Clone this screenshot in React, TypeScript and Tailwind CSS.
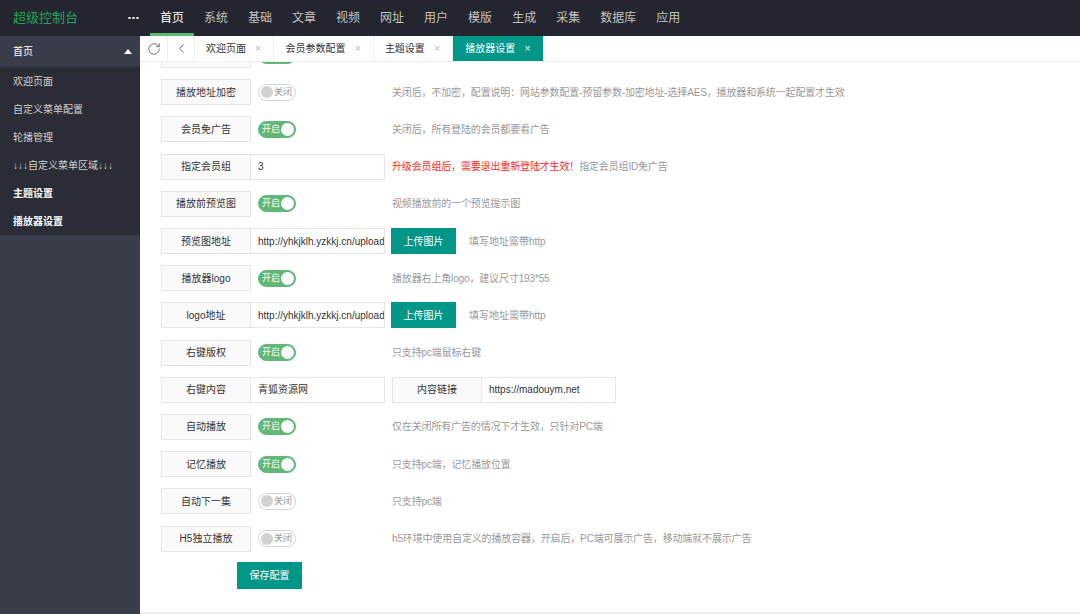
import { RotateCw, ChevronLeft } from "lucide-react";

const navItems = ["首页", "系统", "基础", "文章", "视频", "网址", "用户", "模版", "生成", "采集", "数据库", "应用"];

const sideItems = [
  { text: "欢迎页面", strong: false },
  { text: "自定义菜单配置", strong: false },
  { text: "轮播管理", strong: false },
  { text: "↓↓↓自定义菜单区域↓↓↓", strong: false },
  { text: "主题设置", strong: true },
  { text: "播放器设置", strong: true },
];

const tabs = [
  { text: "欢迎页面", active: false },
  { text: "会员参数配置", active: false },
  { text: "主题设置", active: false },
  { text: "播放器设置", active: true },
];

type Row =
  | { kind: "switch"; label: string; on: boolean; desc: string }
  | { kind: "input"; label: string; value: string; red?: string; desc: string }
  | { kind: "upload"; label: string; value: string; desc: string }
  | { kind: "pair"; label: string; value: string; label2: string; value2: string };

const uploadUrl = "http://yhkjklh.yzkkj.cn/upload/20210315/logo.png";

const rows: Row[] = [
  { kind: "switch", label: "播放器开关", on: true, desc: "" },
  { kind: "switch", label: "播放地址加密", on: false, desc: "关闭后，不加密，配置说明：网站参数配置-预留参数-加密地址-选择AES，播放器和系统一起配置才生效" },
  { kind: "switch", label: "会员免广告", on: true, desc: "关闭后，所有登陆的会员都要看广告" },
  { kind: "input", label: "指定会员组", value: "3", red: "升级会员组后，需要退出重新登陆才生效！", desc: "指定会员组ID免广告" },
  { kind: "switch", label: "播放前预览图", on: true, desc: "视频播放前的一个预览提示图" },
  { kind: "upload", label: "预览图地址", value: uploadUrl, desc: "填写地址需带http" },
  { kind: "switch", label: "播放器logo", on: true, desc: "播放器右上角logo，建议尺寸193*55" },
  { kind: "upload", label: "logo地址", value: uploadUrl, desc: "填写地址需带http" },
  { kind: "switch", label: "右键版权", on: true, desc: "只支持pc端鼠标右键" },
  { kind: "pair", label: "右键内容", value: "青狐资源网", label2: "内容链接", value2: "https://madouym.net" },
  { kind: "switch", label: "自动播放", on: true, desc: "仅在关闭所有广告的情况下才生效，只针对PC端" },
  { kind: "switch", label: "记忆播放", on: true, desc: "只支持pc端，记忆播放位置" },
  { kind: "switch", label: "自动下一集", on: false, desc: "只支持pc端" },
  { kind: "switch", label: "H5独立播放", on: false, desc: "h5环境中使用自定义的播放容器，开启后，PC端可展示广告，移动端就不展示广告" },
];

function Label({ text }: { text: string }) {
  return (
    <div className="w-[90px] h-full shrink-0 flex items-center justify-center bg-[#fafafa] border border-[#e6e6e6] text-[10px] text-[#333] whitespace-nowrap">
      {text}
    </div>
  );
}

function Input({ value }: { value: string }) {
  return (
    <div className="w-[134px] h-full shrink-0 flex items-center pl-[7px] border border-l-0 border-[#e6e6e6] bg-white text-[10px] text-[#333] overflow-hidden whitespace-nowrap">
      {value}
    </div>
  );
}

function Switch({ on }: { on: boolean }) {
  if (on) {
    return (
      <div className="w-[38px] h-[17px] rounded-full bg-[#5fb878] border border-[#5fb878] flex items-center justify-between pl-[3px] pr-[1px] whitespace-nowrap">
        <span className="text-[9px] leading-none text-white">开启</span>
        <span className="w-[13px] h-[13px] shrink-0 rounded-full bg-white" />
      </div>
    );
  }
  return (
    <div className="w-[38px] h-[17px] rounded-full bg-white border border-[#d2d2d2] flex items-center pl-[2px] gap-[1px] whitespace-nowrap overflow-hidden">
      <span className="w-[12px] h-[12px] shrink-0 rounded-full bg-[#d2d2d2]" />
      <span className="text-[9px] leading-none text-[#999]">关闭</span>
    </div>
  );
}

function Desc({ children }: { children: React.ReactNode }) {
  return <div className="ml-[7px] text-[10px] tracking-[-0.15px] text-[#999] whitespace-nowrap">{children}</div>;
}

function FormRow({ row }: { row: Row }) {
  return (
    <div className="h-[26px] mb-[11.2px] flex items-center">
      <Label text={row.label} />
      {row.kind === "switch" && (
        <>
          <div className="w-[134px] h-full shrink-0 flex items-center pl-[7px]">
            <Switch on={row.on} />
          </div>
          <Desc>{row.desc}</Desc>
        </>
      )}
      {row.kind === "input" && (
        <>
          <Input value={row.value} />
          <Desc>
            <span className="text-[#ff2a2a]">{row.red}</span>
            {row.desc}
          </Desc>
        </>
      )}
      {row.kind === "upload" && (
        <>
          <Input value={row.value} />
          <div className="ml-[6px] w-[65px] h-[26px] shrink-0 flex items-center justify-center bg-[#009688] text-white text-[10px]">上传图片</div>
          <div className="ml-[13px] text-[10px] text-[#999] whitespace-nowrap">{row.desc}</div>
        </>
      )}
      {row.kind === "pair" && (
        <>
          <Input value={row.value} />
          <div className="ml-[7px] h-full flex">
            <Label text={row.label2} />
            <Input value={row.value2} />
          </div>
        </>
      )}
    </div>
  );
}

export default function App() {
  return (
    <div className="w-[1080px] h-[614px] flex flex-col overflow-hidden font-[family-name:'Liberation_Sans','Noto_Sans_CJK_SC',sans-serif]">
      {/* top bar */}
      <header className="h-[36px] shrink-0 bg-[#23262e] flex items-center">
        <div className="w-[128px] pl-[13px] text-[13px] text-[#22a35a]">超级控制台</div>
        <div className="w-[22px] flex items-center gap-[1.5px]">
          <span className="w-[2.5px] h-[2.5px] rounded-full bg-[#ddd]" />
          <span className="w-[2.5px] h-[2.5px] rounded-full bg-[#ddd]" />
          <span className="w-[2.5px] h-[2.5px] rounded-full bg-[#ddd]" />
        </div>
        <nav className="flex h-full">
          {navItems.map((n, i) => (
            <div
              key={n}
              className={
                i === 0
                  ? "px-[10px] h-full flex items-center text-[12px] text-white border-b-[3px] border-[#5fb878] pt-[3px]"
                  : "px-[10px] h-full flex items-center text-[12px] text-[#c2c2c2]"
              }
            >
              {n}
            </div>
          ))}
        </nav>
      </header>

      <div className="flex flex-1 min-h-0">
        {/* sidebar */}
        <aside className="w-[140px] shrink-0 bg-[#393d49] flex flex-col">
          <div className="h-[31px] flex items-center justify-between pl-[13px] pr-[8px] text-[10px] text-white">
            <span>首页</span>
            <span className="w-0 h-0 border-l-[4px] border-r-[4px] border-b-[5px] border-l-transparent border-r-transparent border-b-white" />
          </div>
          <div className="bg-[#2a2d35] flex flex-col">
            {sideItems.map((s) => (
              <div
                key={s.text}
                className={
                  s.strong
                    ? "h-[28px] flex items-center pl-[13px] text-[10px] text-white font-bold"
                    : "h-[28px] flex items-center pl-[13px] text-[10px] text-[#d0d0d0]"
                }
              >
                {s.text}
              </div>
            ))}
          </div>
        </aside>

        {/* main */}
        <main className="flex-1 min-w-0 flex flex-col bg-white">
          <div className="h-[26px] shrink-0 flex border-b border-[#eee] text-[10px]">
            <div className="w-[28px] flex items-center justify-center border-r border-[#eee] text-[#666]">
              <RotateCw size={14} strokeWidth={1.5} />
            </div>
            <div className="w-[27px] flex items-center justify-center border-r border-[#eee] text-[#666]">
              <ChevronLeft size={15} strokeWidth={1.5} />
            </div>
            {tabs.map((t) => (
              <div
                key={t.text}
                className={
                  t.active
                    ? "flex items-center pl-[12px] pr-[12px] bg-[#009688] text-white"
                    : "flex items-center pl-[11px] pr-[12px] border-r border-[#eee] text-[#333]"
                }
              >
                <span className="leading-none">{t.text}</span>
                <span className={t.active ? "ml-[9px] text-[11px] leading-none text-[#e0f2f1]" : "ml-[9px] text-[11px] leading-none text-[#bbb]"}>×</span>
              </div>
            ))}
          </div>

          <div className="flex-1 min-h-0 overflow-hidden pl-[21px]">
            <div className="-mt-[19.9px]">
              {rows.map((r) => (
                <FormRow key={r.label} row={r} />
              ))}
              <div className="pl-[76px] -mt-[0.6px]">
                <div className="w-[65px] h-[27px] flex items-center justify-center bg-[#009688] text-white text-[10px]">保存配置</div>
              </div>
            </div>
          </div>
          <div className="h-[2px] shrink-0 bg-[#eeeeee]" />
        </main>
      </div>
    </div>
  );
}
